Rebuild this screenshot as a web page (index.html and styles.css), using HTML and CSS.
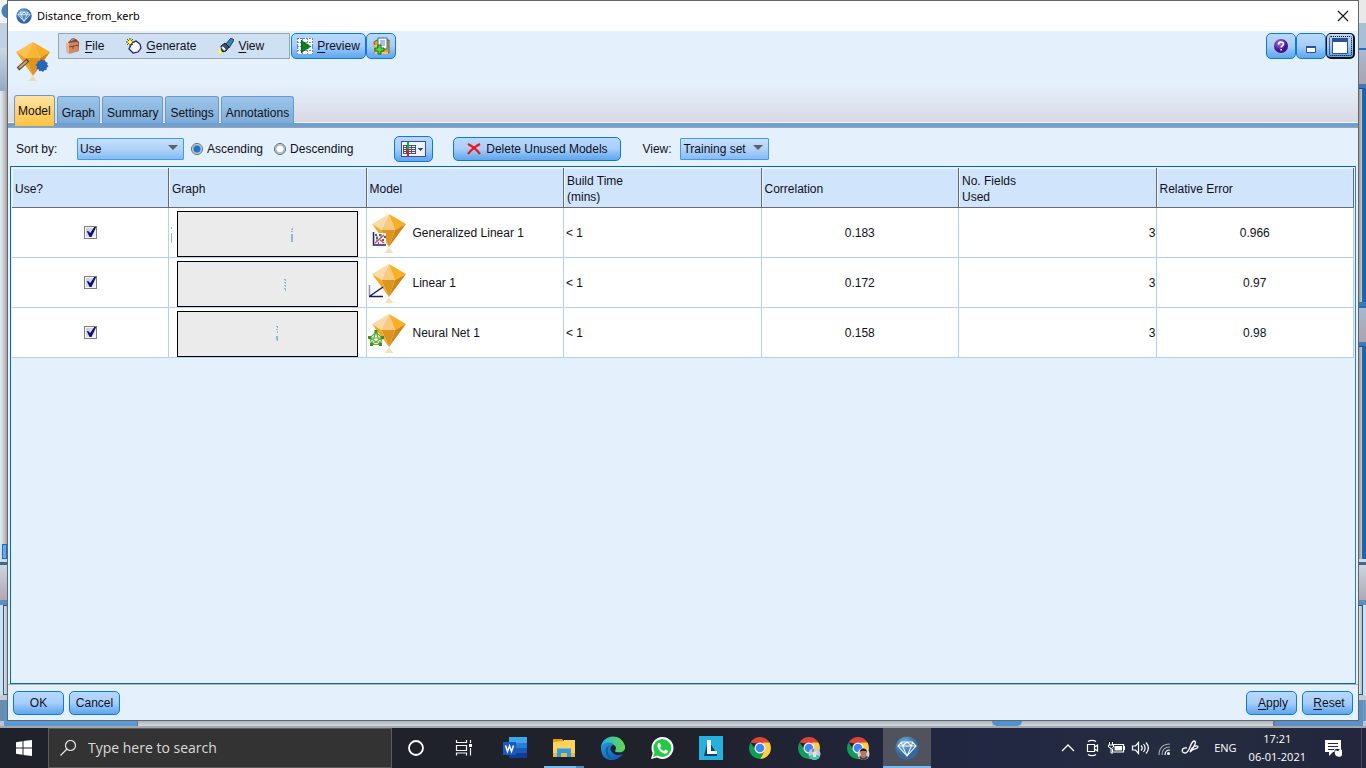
FILE: index.html
```html
<!DOCTYPE html>
<html lang="en">
<head>
<meta charset="utf-8">
<title>Distance_from_kerb</title>
<link rel="stylesheet" href="styles.css">
</head>
<body>
<svg class="defs" aria-hidden="true">
  <defs>
    <radialGradient id="ball" cx="40%" cy="30%"><stop offset="0" stop-color="#7db3e0"/><stop offset="1" stop-color="#34699f"/></radialGradient>
    <radialGradient id="purple" cx="40%" cy="30%"><stop offset="0" stop-color="#b07ae0"/><stop offset="1" stop-color="#45108c"/></radialGradient>
    <linearGradient id="edgeA" x1="0" y1="0" x2="1" y2="0"><stop offset="0" stop-color="#28b5e0"/><stop offset="1" stop-color="#62d84e"/></linearGradient>
    <linearGradient id="edgeB" x1="0" y1="0" x2="1" y2="1"><stop offset="0" stop-color="#2397de"/><stop offset="1" stop-color="#0d54a5"/></linearGradient>
    <symbol id="gem-ball" viewBox="0 0 24 24">
      <circle cx="12" cy="12" r="11.5" fill="url(#ball)"/>
      <path d="M6.500 6h11L21 10l-9 10L3 10zM3 10h18M12 6l-4.500 4L12 20l4.500-10zM6.500 6l1 4M17.500 6l-1 4" fill="none" stroke="#f1f8ff" stroke-width="1.100"/>
    </symbol>
    <symbol id="nugget" viewBox="0 0 40 42">
      <path d="M21 2 4 12l9.500 6z" fill="#fbdba9"/>
      <path d="M21 2l-7.500 16H27z" fill="#fbc981"/>
      <path d="M21 2l6 16 11-6z" fill="#f7b024"/>
      <path d="M4 12l9.500 6L21 35z" fill="#f6a91c"/>
      <path d="M13.500 18H27l-6 17z" fill="#dc951d"/>
      <path d="M38 12l-11 6-6 17z" fill="#d08619"/>
      <path d="M21 35.500l-4.500 5.500h9z" fill="#f6dfba"/>
    </symbol>
    <symbol id="chrome" viewBox="0 0 24 24">
      <path d="M2.500 6.500a11 11 0 0 1 19 0L12 8z" fill="#db4437"/>
      <path d="M21.500 6.500A11 11 0 0 1 12 23l4.500-8.500L15 6.500z" fill="#ffcd40"/>
      <path d="M2.500 6.500A11 11 0 0 0 12 23l4-7-8-2z" fill="#0f9d58"/>
      <circle cx="12" cy="12" r="5.500" fill="#f4f4f4"/><circle cx="12" cy="12" r="4.300" fill="#4285f4"/>
    </symbol>
  </defs>
</svg>

<div class="desktop">
  <div class="workspace">
    <div class="strip strip-left" aria-hidden="true">
      <i class="caption"></i><i class="menu"></i><i class="tools"></i><i class="canvas"></i><i class="node"></i><i class="split"></i><i class="palette"></i><i class="bar"></i><i class="box"></i><i class="gap"></i><i class="status"></i>
    </div>

    <main class="dialog">
      <header class="titlebar">
        <svg class="title-icon"><use href="#gem-ball"/></svg>
        <h1>Distance_from_kerb</h1>
        <button class="close" aria-label="Close"><svg viewBox="0 0 12 12"><path d="M1 1l10 10M11 1 1 11" stroke="#111" stroke-width="1.100"/></svg></button>
      </header>

      <div class="top">
        <div class="top-row">
          <svg class="model-icon" viewBox="0 0 36 42">
            <path d="M17 1 0 11l10 6z" fill="#fbc24d"/><path d="M17 1l-7 16h14z" fill="#f9b536"/><path d="M17 1l7 16 10-6z" fill="#f7ae22"/>
            <path d="M0 11l10 6 7 18z" fill="#f0a01c"/><path d="M10 17h14l-7 18z" fill="#dd951f"/><path d="M34 11l-10 6-7 18z" fill="#cf8418"/>
            <path d="M17 35l-5 5h9z" fill="#ead9bd"/>
            <path d="M2 28 12 19" stroke="#4b4b55" stroke-width="4"/><path d="M3 27l8-7" stroke="#e5a445" stroke-width="2"/>
            <path d="M25.500 18l1.500 1.500 2-.5.700 2 2 .8-.5 2 1.300 1.700-1.800 1.300-.2 2.200-2.200.2-1.300 1.800-1.700-1.300-2 .5-.8-2-2-.7.500-2-1.500-1.500 1.800-1.500.2-2.200 2.200-.3z" fill="#2b63b5"/>
          </svg>
          <nav class="menubar">
            <button class="menu-file"><svg viewBox="0 0 16 16"><path d="M3 4 11 1l3 3v9l-9 2z" fill="#8e4a2f"/><path d="M1 5l12-1 1 9-10 3-3-3z" fill="#d08a62"/><path d="M1 5h3v11l-3-3z" fill="#e9b694"/><path d="M5 4c0-4 6-4 6-1" fill="none" stroke="#5c2d1d"/><path d="M4 9l10-2M8 8v3" stroke="#80442b"/></svg><span><u>F</u>ile</span></button>
            <button class="menu-generate"><svg viewBox="0 0 16 16"><path d="M6 5l4-2 4 3 1 4-3 4-5 1-4-4z" fill="#f4f7ff" stroke="#151585" stroke-width="1.200"/><path d="M4 0v8M0 4h8M1 1l6 6M7 1 1 7" stroke="#5d5600"/><path d="M4 2v4M2 4h4" stroke="#ffff29" stroke-width="2"/></svg><span><u>G</u>enerate</span></button>
            <button class="menu-view"><svg viewBox="0 0 16 16"><path d="M7 7l6-7 3 2-5 8z" fill="#3a85b8" stroke="#173e63"/><path d="M3 8l4-3 4 4-3 4-4 1z" fill="#3c5265" stroke="#17212b"/><path d="M4 9l3 3" stroke="#fff" stroke-width="2"/><path d="M1 10l4 5-5 1z" fill="#fff25a"/></svg><span><u>V</u>iew</span></button>
          </nav>
          <div class="button-group">
            <button class="push preview"><svg viewBox="0 0 16 16" shape-rendering="crispEdges"><path d="M0 0h16v16H0z" fill="#f7faff"/><path d="M0 .5h16M0 4.500h16M0 8.500h16M0 12.500h16M.5 0v16M5.500 0v16M10.500 0v16M15.500 0v16" stroke="#6b86b4" stroke-dasharray="2 1"/><path d="M4 2v13l10-6.500z" fill="#12801e" stroke="#07480c" stroke-width=".5"/></svg><span><u>P</u>review</span></button>
            <button class="push add" aria-label="Add output"><svg viewBox="0 0 18 18"><path d="M2 5l3-2h12v13H3z" fill="#d9a33f" stroke="#7d5a16"/><path d="M6 1h9v11H6z" fill="#fff" stroke="#316b9e"/><path d="M8 4h5M8 6h5M8 8h5" stroke="#4c83b8"/><path d="M2 8h3v7h11v2H3z" fill="#e9c56c"/><path d="M3 11h3V8h3v3h3v3H9v3H6v-3H3z" fill="#5ed047" stroke="#167014"/></svg></button>
          </div>
          <div class="button-group right">
            <button class="push" aria-label="Help"><svg viewBox="0 0 16 16"><circle cx="8" cy="8" r="7" fill="url(#purple)"/><path d="M5.500 6.500c0-3.500 5-3 5-.5 0 1.800-2.300 1.500-2.300 3.500M8.200 11v1.600" fill="none" stroke="#fff" stroke-width="1.700"/></svg></button>
            <button class="push" aria-label="Minimize"><svg viewBox="0 0 16 16"><path d="M3.500 8.500h9v6h-9z" fill="#fff" stroke="#285590"/><path d="M3 8h10v2H3z" fill="#285590"/></svg></button>
            <button class="push focused" aria-label="Maximize"><svg viewBox="0 0 16 16"><path d="M.5.5h15v15H.5z" fill="#fff" stroke="#285590"/><path d="M0 0h16v4H0z" fill="#285590"/></svg></button>
          </div>
        </div>
        <div class="tabs" role="tablist">
          <button role="tab" class="tab active" aria-selected="true">Model</button>
          <button role="tab" class="tab">Graph</button>
          <button role="tab" class="tab">Summary</button>
          <button role="tab" class="tab">Settings</button>
          <button role="tab" class="tab">Annotations</button>
        </div>
      </div>

      <form class="controls">
        <label class="sort-label" for="sort">Sort by:</label>
        <span class="combo combo-sort"><select id="sort"><option>Use</option></select></span>
        <label class="radio"><input type="radio" name="order" checked>Ascending</label>
        <label class="radio"><input type="radio" name="order">Descending</label>
        <button type="button" class="push columns" aria-label="Choose columns"><svg viewBox="0 0 25 16" shape-rendering="crispEdges"><path d="M.5.5h24v15H.5z" fill="#edf2ff" stroke="#3d4a9b"/><path d="M2 4.500h13M2 6.500h13M2 8.500h13M2 10.500h13M2 12.500h13M2.500 4v9M5.500 4v9M10.500 4v9M14.500 4v9" stroke="#4a5170"/><path d="M6 1h2v7H6z" fill="#10b316"/><path d="M6 8h2v7H6z" fill="#f01520"/><path d="M17 7h5l-2.500 3z" fill="#3d4a9b"/></svg></button>
        <button type="button" class="push delete"><svg viewBox="0 0 14 12"><path d="M1 1c4 2 9 6 12 10M13 1C9 3 4 7 1 11" fill="none" stroke="#f21414" stroke-width="2.200"/></svg>Delete Unused Models</button>
        <label class="view-label" for="view">View:</label>
        <span class="combo combo-view"><select id="view"><option>Training set</option></select></span>
      </form>

      <section class="pane">
        <table>
          <colgroup><col class="col-use"><col><col><col><col><col><col></colgroup>
          <thead><tr><th>Use?</th><th>Graph</th><th>Model</th><th>Build Time<br>(mins)</th><th>Correlation</th><th>No. Fields<br>Used</th><th>Relative Error</th></tr></thead>
          <tbody>
            <tr>
              <td class="center"><input type="checkbox" aria-label="Use Generalized Linear 1" checked></td>
              <td class="graph"><div class="plot"><svg viewBox="0 0 179 44" preserveAspectRatio="xMinYMin slice" shape-rendering="crispEdges"><path d="M113 17h2v1h-2zM114 16h1v1h-1zM113 19h2v1h-2zM113 22h2v8h-2zM-7 15h1v2h-1zM-7 21h1v10h-1z" fill="#8bb9d0"/></svg></div></td>
              <td class="model"><div class="name"><svg viewBox="0 0 40 42"><use href="#nugget"/><path d="M6 21h12v12H6z" fill="#e9edf5"/><path d="M5.500 20v13H18" fill="none" stroke="#23246c" stroke-width="1.500"/><path d="M7 31l9-8M12 28l4 3" stroke="#e04848" stroke-width="1.300"/><path d="M7 23h2m2 0h2m3 2h2M8 26h2m4 2h2m-6 3h1" stroke="#252c73" stroke-width="1.500"/><path d="M9 24v5m4-7v4" stroke="#2b9744"/></svg>Generalized Linear 1</div></td>
              <td>&lt; 1</td><td class="center">0.183</td><td class="num">3</td><td class="center">0.966</td>
            </tr>
            <tr>
              <td class="center"><input type="checkbox" aria-label="Use Linear 1" checked></td>
              <td class="graph"><div class="plot"><svg viewBox="0 0 179 44" preserveAspectRatio="xMinYMin slice" shape-rendering="crispEdges"><path d="M106 17h2v1h-2zM107 18h1v1h-1zM106 20h2v1h-2zM107 21h1v1h-1zM106 23h2v1h-2zM107 24h1v1h-1zM106 26h2v1h-2zM107 27h1v2h-1z" fill="#8bb9d0"/></svg></div></td>
              <td class="model"><div class="name"><svg viewBox="0 0 40 42"><use href="#nugget"/><path d="M1.500 23v11" stroke="#8f8fae" stroke-width="1.500"/><path d="M2 34l13-9M1 34.500h14" stroke="#17176e" stroke-width="1.500"/></svg>Linear 1</div></td>
              <td>&lt; 1</td><td class="center">0.172</td><td class="num">3</td><td class="center">0.97</td>
            </tr>
            <tr>
              <td class="center"><input type="checkbox" aria-label="Use Neural Net 1" checked></td>
              <td class="graph"><div class="plot"><svg viewBox="0 0 179 44" preserveAspectRatio="xMinYMin slice" shape-rendering="crispEdges"><path d="M98 14h2v1h-2zM99 15h1v1h-1zM98 17h2v1h-2zM99 19h1v2h-1zM98 24h2v4h-2zM99 28h1v1h-1z" fill="#8bb9d0"/></svg></div></td>
              <td class="model"><div class="name"><svg viewBox="0 0 40 42"><use href="#nugget"/><path d="M8 20 3.500 32.500h9zM2 26 12.500 32.500M14 26 3.500 32.500M2 26h12L8 20zM2 26l1.500 6.500M14 26l-1.500 6.500" fill="none" stroke="#6cae43" stroke-width="1.200"/><path d="M6.500 18h3v3h-3zM0 24h3v3H0zM13 24h3v3h-3zM2 31h3v3H2zM11 31h3v3h-3z" fill="#3d9220"/></svg>Neural Net 1</div></td>
              <td>&lt; 1</td><td class="center">0.158</td><td class="num">3</td><td class="center">0.98</td>
            </tr>
          </tbody>
        </table>
      </section>

      <footer class="actions">
        <button class="push action">OK</button>
        <button class="push action">Cancel</button>
        <button class="push action apply"><span><u>A</u>pply</span></button>
        <button class="push action"><span><u>R</u>eset</span></button>
      </footer>
    </main>

    <div class="strip strip-right" aria-hidden="true">
      <i class="caption"></i><i class="menu"></i><i class="tools"></i><i class="edge"></i><i class="inner"></i><i class="edge"></i><i class="tools second"></i><i class="edge"></i><i class="canvas"></i><i class="split"></i><i class="palette"></i><i class="bar"></i><i class="box"></i><i class="gap"></i><i class="status"></i>
    </div>
    <div class="underside" aria-hidden="true"><i class="seg-left"></i><i class="seg-mid"></i><i class="seg-tab"></i><i class="seg-mid short"></i><i class="seg-right"></i></div>
  </div>

  <footer class="taskbar">
    <button class="start" aria-label="Start"><svg viewBox="0 0 16 16"><path d="M0 2.300 6.500 1.300V7.500H0zM7.500 1.100 16 0v7.500H7.500zM0 8.500h6.500v6.200L0 13.700zM7.500 8.500H16V16l-8.500-1.100z" fill="#fff"/></svg></button>
    <label class="search"><svg viewBox="0 0 16 16"><circle cx="10.500" cy="5.500" r="5" fill="none" stroke="#e6e6e6" stroke-width="1.200"/><path d="M7 9 .5 15.500" stroke="#e6e6e6" stroke-width="1.300"/></svg><input type="text" placeholder="Type here to search" aria-label="Type here to search"></label>
    <button class="app" aria-label="Cortana"><svg viewBox="0 0 24 24"><circle cx="12" cy="12" r="7" fill="none" stroke="#fff" stroke-width="1.800"/></svg></button>
    <button class="app" aria-label="Task View"><svg viewBox="0 0 24 24"><path d="M4.500 4v2.500h10V4M4.500 19.500v-2.500h10v2.500M4.500 9.500h10v5h-10zM18.500 4v3M18.500 12v7.500" fill="none" stroke="#f4f4f4" stroke-width="1.200"/><path d="M17 8h3v3h-3z" fill="#fff"/></svg></button>
    <div class="pinned">
      <button class="app" aria-label="Word"><svg viewBox="0 0 24 24"><path d="M6 1h18v6H6z" fill="#41a5ee"/><path d="M6 7h18v5H6z" fill="#2b7cd3"/><path d="M6 12h18v5H6z" fill="#185abd"/><path d="M6 17h18v5H6z" fill="#103f91"/><path d="M0 6h13v13H0z" fill="#185abd"/><path d="M2.500 9.500l2 6 2-5.500 2 5.500 2-6" fill="none" stroke="#fff" stroke-width="1.500"/></svg></button>
      <button class="app running" aria-label="File Explorer"><svg viewBox="0 0 24 24"><path d="M1 3h9l2 2v3H1z" fill="#e3a000"/><path d="M1 6l11-1V4h11v17H1z" fill="#fdd35c"/><path d="M1 17h22v4H1z" fill="#e9b93f"/><path d="M5 12.500h14V21h-4v-4H9v4H5z" fill="#2f9be6"/></svg></button>
      <button class="app" aria-label="Edge"><svg viewBox="0 0 24 24"><path d="M0 12C0-1 20-5 24 10c1 6-5 7-9 6-2-1 0-2 0-4 0-4-8-6-15 0z" fill="url(#edgeA)"/><path d="M0 12C1 6 10 5 13 9c-4 0-5 5-1 8 3 3 7 2 10 1C16 27 0 27 0 12z" fill="url(#edgeB)"/><path d="M9 9c-4 4-2 12 3 14-8-1-10-12-3-14z" fill="#0d4d99" opacity=".7"/></svg></button>
      <button class="app" aria-label="WhatsApp"><svg viewBox="0 0 24 24"><path d="M1 23l1.700-6A11 11 0 1 1 7 21.500z" fill="#fff"/><circle cx="12.300" cy="12" r="9" fill="#26c943"/><path d="M3 21l2-6 4 4z" fill="#26c943"/><path d="M8 7l2 0 1 3-1 1.500c1 2 2 3 4 3.500l1.500-1.500 2.500 1.500c0 2-2 3-4 2.500C10 16 6 12 8 7z" fill="#fff"/></svg></button>
      <button class="app" aria-label="L app"><svg viewBox="0 0 24 24"><path d="M0 0h24v24H0z" fill="#26b1dc"/><path d="M9 4 5 20h13v-2z" fill="#123f6c"/><path d="M8 4h4v11h6v3H8z" fill="#fff"/></svg></button>
      <button class="app" aria-label="Chrome"><svg viewBox="0 0 24 24"><use href="#chrome"/></svg></button>
      <button class="app" aria-label="Chrome profile 1"><svg viewBox="0 0 24 24"><use href="#chrome"/><circle cx="17.500" cy="18" r="6" fill="#bdcad8"/><path d="M12 20c4-2 8-1 11 0-2 5-9 5-11 0z" fill="#39c4ba"/><path d="M16 13l2 3 2-2-1 7h-3z" fill="#efe3bf"/><path d="M16 13v3" stroke="#3b4655"/></svg></button>
      <button class="app" aria-label="Chrome profile 2"><svg viewBox="0 0 24 24"><use href="#chrome"/><circle cx="17.500" cy="18" r="6" fill="#d9d5d5"/><path d="M13 21c3-2 7-2 9 0-2 4-7 4-9 0z" fill="#45404a"/><ellipse cx="17.500" cy="18" rx="3" ry="4" fill="#b87962"/><path d="M14 17c-1-6 8-6 7 0l-1-2h-5z" fill="#25191a"/></svg></button>
      <button class="app current" aria-label="Modeler"><svg viewBox="0 0 24 24"><use href="#gem-ball"/></svg></button>
    </div>
    <div class="tray">
      <svg viewBox="0 0 24 24"><path d="M6 15l6-6 6 6" fill="none" stroke="#fff" stroke-width="1.300"/></svg>
      <svg viewBox="0 0 24 24"><path d="M7.500 8.500h7v7h-7zM14.500 11l3-2v6l-3-2M8 5.500c2-1.500 6-1.500 8 0M8 18.500c2 1.500 6 1.500 8 0" fill="none" stroke="#fff" stroke-width="1.200"/></svg>
      <svg viewBox="0 0 24 24"><path d="M9 8.500h10.500v7.500H8.500v-3" fill="none" stroke="#fff" stroke-width="1.200"/><path d="M10.500 10h7.500v4.500h-7.500z" fill="#fff"/><path d="M5.500 6v3M8.500 6v3M4.500 9h5v2l-2 1.500-3-1.500zM7 12v5h2" fill="none" stroke="#fff"/><path d="M20 10h1v4h-1z" fill="#fff"/></svg>
      <svg viewBox="0 0 24 24"><path d="M4.500 10h3l3-3.500v11l-3-3.500h-3zM13 9.500c1.500 1.500 1.500 3.500 0 5M15.500 8c2 2.500 2 5.500 0 8M18 6.500c3 3.500 3 7.500 0 11" fill="none" stroke="#fff" stroke-width="1.200"/></svg>
      <svg viewBox="0 0 24 24"><path d="M7 19C7 12 11 8 18 8M10 19c0-5 3-8 8-8" fill="none" stroke="#a4a9b5" stroke-width="1.200"/><path d="M13 19c0-3 2-5 5-5" fill="none" stroke="#fff" stroke-width="1.200"/><circle cx="16.500" cy="17.500" r="1.500" fill="#fff"/></svg>
      <svg class="pen" viewBox="0 0 24 24"><path d="M9 12c-6-1-6 5-2 5 5 0 5-11 9-12 3 0 1 5-4 11 1-5 7-8 8-5 0 2-5 1-8 5" fill="none" stroke="#fff" stroke-width="1.300"/></svg>
      <span class="lang">ENG</span>
      <time class="clock">17:21<br>06-01-2021</time>
      <button class="notice" aria-label="Notifications"><svg viewBox="0 0 18 18"><path d="M1 1h16v12H9l-4 4v-4H1z" fill="#fff"/><path d="M4 4.500h10M4 7.500h10M4 10.500h6" stroke="#24283b"/><circle cx="13.500" cy="13" r="3.200" fill="#24283b"/><path d="M16 10a4 4 0 1 1-4 1c1 2 3 1 4-1z" fill="#fff"/></svg></button>
    </div>
  </footer>
</div>
</body>
</html>
```
FILE: styles.css
```css
* { box-sizing: border-box; }

body {
  margin: 0;
  font: 12px/16px "Liberation Sans", Arial, sans-serif;
  color: #10101a;
}

button, select, input { font: inherit; color: inherit; margin: 0; }
button { padding: 0; border: 0; background: none; display: flex; align-items: center; justify-content: center; }
svg { display: block; flex: none; }
u { text-underline-offset: 2px; }
.defs { position: absolute; width: 0; height: 0; }

.desktop { display: flex; flex-direction: column; min-height: 100vh; }

.workspace {
  flex: 1;
  display: grid;
  grid-template-columns: 7px minmax(0, 1fr) 7px;
  grid-template-rows: 1fr 7px;
  background: #d5dfea;
}

/* Edges of the main window behind the dialog */
.strip { display: flex; flex-direction: column; overflow: hidden; }
.strip i, .underside i { display: block; flex: none; }
.strip .caption { height: 23px; background: #e9e9e9; }
.strip .menu { height: 25px; background: #bfd0e0; }
.strip .tools { height: 43px; background: linear-gradient(#cbd7e2, #91abc3); }
.strip .canvas { flex: 1; background: linear-gradient(90deg, #d8e4f1 2px, #dcdcdc 2px, #a4a4a4); }
.strip .node { height: 15px; margin-left: 2px; border: 1px solid #1470c0; background: #70a9df; }
.strip .split { height: 6px; border-bottom: 3px solid #43678b; background: #cfdae5; }
.strip .palette { height: 35px; background: linear-gradient(#cbd5e0, #afa8b4); }
.strip .bar { height: 5px; background: #5d8fbb; }
.strip .box { height: 90px; margin-left: 3px; border: 1px solid #0a5eaa; background: linear-gradient(90deg, #e4e4e4, #aeb8c2); }
.strip .gap { height: 5px; background: #c4ccd6; }
.strip .status { height: 21px; background: #5793ca; border-left: 3px double #7c8793; }
.strip-left .box { border-right: 0; }
.strip-left .caption { background: radial-gradient(circle at 9px 11px, #4783b8 7px, #f3f3f3 8px); }
.strip-right .menu { background: #a9bfd6; }
.strip-right .tools { height: 36px; border-top: 2px solid #1f6fba; background: linear-gradient(#a9b9cf, #aaa2b1); }
.strip-right .edge { height: 4px; background: #3b7ab9; }
.strip-right .inner { height: 214px; }
.strip-right .inner, .strip-right .canvas { border-right: 4px solid #1d66ab; border-top: 1px solid #0a519a; background: linear-gradient(90deg, #989898, #c8ccd2); }
.strip-right .box { margin: 0 3px 0 0; border-left: 0; }
.strip-right .status { border-left: 0; border-right: 3px double #8997a6; }

.underside { grid-column: 1 / -1; display: flex; border-bottom: 2px solid #a3a6aa; background: #bcc6d2; }
.underside .seg-left { width: 134px; margin-left: 4px; border-right: 1px solid #747474; background: #5b9bd5; }
.underside .seg-mid { flex: 1; background: linear-gradient(#a9b4c2, #d3d9e0); }
.underside .seg-tab { width: 30px; background: #4c91d0; border-radius: 0 0 6px 6px; }
.underside .short { flex: 0 0 251px; }
.underside .seg-right { width: 90px; margin-right: 3px; background: #5793ca; border-left: 2px solid #777; }

/* Dialog */
.dialog {
  display: flex;
  flex-direction: column;
  border: 1px solid #646668;
  background: #e4f0fc;
  min-width: 0;
}

.titlebar { display: flex; align-items: center; height: 30px; padding: 0 9px 0 8px; background: #fff; }
.title-icon { width: 16px; height: 16px; }
h1 { margin: 0 auto 0 5px; font: 11px/16px "Noto Sans", "Open Sans", sans-serif; color: #000; }
.close svg { width: 12px; height: 12px; }

.top {
  padding: 2px 3px 0 6px;
  background: linear-gradient(#e4f0fc 60%, #dad7e4);
  border-bottom: 4px solid #6ea1d3;
  box-shadow: inset 0 -1px #f6f6fb;
}
.top-row { display: flex; align-items: flex-start; min-height: 62px; }
.model-icon { width: 36px; height: 42px; margin: 8px 6px 0 2px; }
.menubar { display: flex; height: 26px; width: 232px; padding-left: 6px; gap: 22px; border: 1px solid #9aa5b2; background: #cfe0f2; }
.menubar button, .preview { gap: 4px; }
.menubar svg, .preview svg { width: 16px; height: 16px; }
.button-group { display: flex; margin-left: 1px; }
.right { margin-left: auto; }

.push {
  min-width: 30px;
  height: 26px;
  border: 1px solid #0d79db;
  border-radius: 5px;
  background: linear-gradient(#b9d8fb, #a6cefa 50%, #71b0f2 85%, #61a6ee);
}
.preview { width: 75px; }
.add svg { width: 18px; height: 18px; }
.right svg { width: 16px; height: 16px; }
.right .focused { width: 29px; min-width: 0; border: 1px solid #151515; border-width: 1px 2px 2px 1px; outline: 1px dotted #000; outline-offset: -4px; }

.tabs { display: flex; align-items: flex-end; gap: 2px; }
.tab {
  height: 27px;
  padding: 5px 4px 0;
  border: 1px solid #659bcf;
  border-bottom: 0;
  border-radius: 3px 3px 0 0;
  background: linear-gradient(#9dc5ea, #7eabd6);
}
.tab.active { height: 31px; margin-bottom: -3px; padding: 0 3px; background: linear-gradient(#ffe3a4, #ffc23f); z-index: 1; }

.controls { display: flex; align-items: center; height: 39px; padding: 3px 8px 0; border-top: 1px solid #9aa5b2; }
.sort-label { width: 61px; }
.combo { display: flex; position: relative; }
.combo::after {
  content: "";
  position: absolute;
  right: 6px;
  top: 7px;
  border: 5px solid transparent;
  border-top-color: #5b6066;
  border-bottom: 0;
  pointer-events: none;
}
.combo select {
  appearance: none;
  width: 100%;
  height: 22px;
  padding: 0 2px;
  border: 1px solid #419bec;
  border-radius: 1px;
  background: linear-gradient(#c6dffb, #b0d3f9 50%, #85bcf3);
}
.combo-sort { width: 107px; }
.combo-view { width: 89px; }
.radio { display: flex; align-items: center; gap: 4px; margin-left: 7px; }
.radio + .radio { margin-left: 11px; }
.radio input {
  appearance: none;
  width: 12px;
  height: 12px;
  border: 1px solid #5c6670;
  border-radius: 50%;
  background: radial-gradient(circle, #fff 3px, #93a9bd 4px, #e7edf2 5px);
}
.radio input:checked { background: radial-gradient(circle, #1c75c9 3px, #a8b8c6 4px, #e7edf2 5px); }
.columns { width: 39px; margin-left: 41px; }
.columns svg { width: 25px; height: 16px; }
.delete { width: 168px; height: 24px; margin: 0 21px 0 20px; gap: 5px; }
.delete svg { width: 14px; height: 12px; }
.view-label { width: 38px; }

.pane { flex: 1; margin: 0 2px; padding: 1px; border: 1px solid #0a64b0; border-right-color: #3b7cb8; }
table { width: 100%; table-layout: fixed; border-collapse: separate; border-spacing: 0; }
.col-use { width: 157px; }
th { height: 40px; padding: 2px 3px 0; border-right: 1px solid #646c78; border-bottom: 1px solid #646c78; background: #d0e4fc; font-weight: normal; text-align: left; box-shadow: inset 1px 1px #edf5fe; }
td { height: 50px; padding: 0 2px; border-right: 1px solid #b4cfea; border-bottom: 1px solid #b4cfea; background: #fff; }
.center { text-align: center; }
.num { padding-right: 0; text-align: right; }
.graph { padding: 3px 8px 0; }
.plot { height: 46px; border: 1px solid #000; background: #ebebeb; }
.plot svg { width: 100%; height: 44px; overflow: visible; }
.model { padding-left: 1px; }
.name { display: flex; align-items: center; gap: 5px; }
.name svg { width: 40px; height: 42px; }

input[type="checkbox"] {
  appearance: none;
  display: inline-block;
  width: 13px;
  height: 13px;
  border: 1px solid #7b7f84;
  background: linear-gradient(135deg, #c4c7cf, #f5f5f7);
  box-shadow: inset 0 0 0 1px #f5f5f5;
  vertical-align: -2px;
}
input[type="checkbox"]:checked::after {
  content: "";
  display: block;
  width: 12px;
  height: 11px;
  background: #10107c;
  clip-path: polygon(18% 42%, 38% 46%, 46% 62%, 84% 0, 100% 0, 58% 96%, 42% 96%);
}

.actions { display: flex; align-items: center; gap: 5px; height: 36px; padding: 1px 5px 0; border-top: 1px solid #a9b4c0; }
.action { width: 51px; height: 24px; }
.apply { margin-left: auto; }
.actions span { padding-left: 3px; }

/* Taskbar */
.taskbar { display: flex; height: 40px; background: linear-gradient(90deg, #20222b, #1f212b 50%, #222743 72%, #242c3f 86%, #23263d); color: #fff; }
.start { width: 48px; }
.start svg { width: 16px; height: 16px; }
.search { display: flex; align-items: center; flex: 0 1 344px; gap: 12px; padding-left: 11px; border: 1px solid #5c5c5c; background: #333; }
.search svg { width: 16px; height: 16px; }
.search input { flex: 1; min-width: 0; padding: 0; border: 0; outline: 0; background: none; font: 14px/20px "Open Sans", "Noto Sans", sans-serif; }
.search input::placeholder { color: #dadada; opacity: 1; }
.app { width: 48px; height: 40px; }
.app svg { width: 24px; height: 24px; }
.pinned { display: flex; gap: 1px; margin-left: 3px; }
.running { background: linear-gradient(90deg, #76b9ed 32px, #5786af 32px) center bottom / 40px 2px no-repeat; }
.current { background: #50525e; box-shadow: inset 0 -2px #76b9ed; }
.tray { display: flex; align-items: center; margin: 0 4px 0 auto; padding-right: 19px; border-right: 1px solid #4b4e61; font: 11px/18px "Open Sans", "Noto Sans", sans-serif; }
.tray > svg { width: 24px; height: 24px; }
.tray > .pen { margin-left: 2px; }
.lang { margin-left: 12px; }
.clock { margin: 0 18px 0 12px; text-align: center; }
.notice svg { width: 18px; height: 18px; }
```
